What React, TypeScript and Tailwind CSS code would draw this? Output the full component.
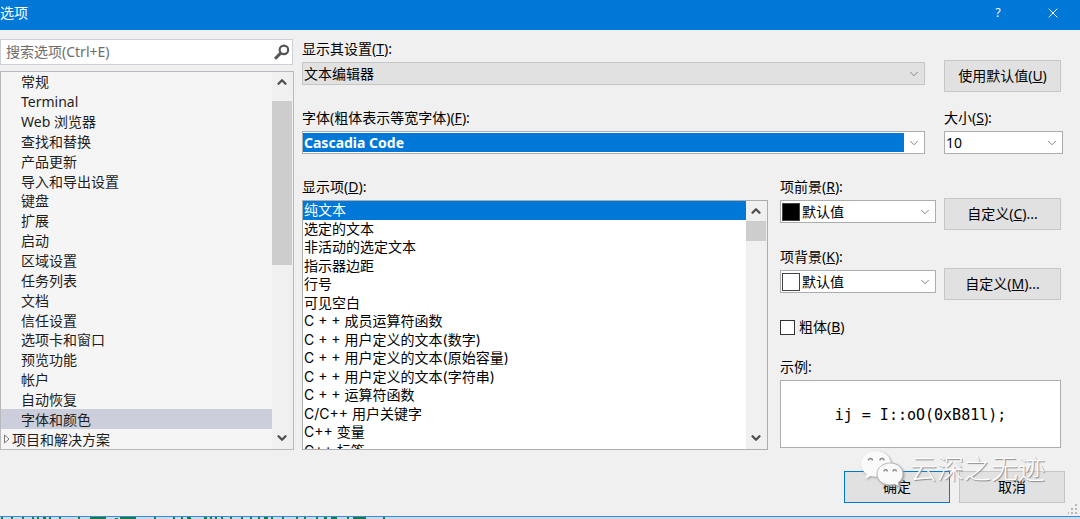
import React from 'react';
import { ChevronDown, ChevronUp, X } from 'lucide-react';

const treeItems = [
  '常规', 'Terminal', 'Web 浏览器', '查找和替换', '产品更新', '导入和导出设置', '键盘', '扩展', '启动',
  '区域设置', '任务列表', '文档', '信任设置', '选项卡和窗口', '预览功能', '帐户', '自动恢复', '字体和颜色',
];

const displayItems = [
  '纯文本', '选定的文本', '非活动的选定文本', '指示器边距', '行号', '可见空白', 'C + + 成员运算符函数',
  'C + + 用户定义的文本(数字)', 'C + + 用户定义的文本(原始容量)', 'C + + 用户定义的文本(字符串)',
  'C + + 运算符函数', 'C/C++ 用户关键字', 'C++ 变量', 'C++ 标签',
];

const buttonClass = 'h-8 border border-[#c6c6c6] bg-[#e1e1e1] text-center leading-[30px]';

function FieldLabel({ id, text, hotkey }: { id: string; text: string; hotkey: string }) {
  return (
    <label htmlFor={id} className="mb-[3px] block h-5 leading-5">
      {text}(<u className="underline-offset-1">{hotkey}</u>):
    </label>
  );
}

type ComboProps = {
  id: string;
  value: string;
  frame?: string;
  field?: string;
  swatch?: string;
};

function Combo({ id, value, frame = 'border-[#adadad] bg-white', field = '', swatch }: ComboProps) {
  return (
    <div className={`flex h-[23px] items-center border py-px ${frame}`}>
      {swatch && <span className={`mx-px size-[18px] shrink-0 border border-[#444] ${swatch}`} />}
      <select id={id} defaultValue={value} className={`h-full min-w-0 flex-1 appearance-none pl-px leading-[19px] outline-none ${field}`}>
        <option>{value}</option>
      </select>
      <ChevronDown className="mx-[3px] size-3.5 shrink-0 text-[#777]" strokeWidth={1.5} />
    </div>
  );
}

function ScrollBar({ lead, thumb }: { lead: string; thumb: string }) {
  return (
    <div className="flex w-[21px] shrink-0 flex-col items-center bg-[#f0f0f0] pr-px">
      <div className={`flex items-center ${lead}`}>
        <ChevronUp className="size-3.5 text-[#505050]" strokeWidth={4} />
      </div>
      <div className={`w-full bg-[#cdcdcd] ${thumb}`} />
      <ChevronDown className="mt-auto mb-1 size-3.5 text-[#505050]" strokeWidth={4} />
    </div>
  );
}

function OptionTree() {
  return (
    <aside className="w-[294px] shrink-0">
      <div className="mr-px flex h-[26px] items-center border border-[#ccced8] bg-white pr-0.5">
        <input
          type="text"
          aria-label="搜索选项"
          placeholder="搜索选项(Ctrl+E)"
          className="min-w-0 flex-1 pl-[5px] outline-none placeholder:text-[#6d6d6d]"
        />
        <svg viewBox="0 0 15 15" className="size-4" fill="none" stroke="#555">
          <circle cx="9.3" cy="5.5" r="4" strokeWidth="2" />
          <path d="M6.3 8.6 1 13.8" strokeWidth="2.8" />
        </svg>
      </div>
      <div className="mt-1.5 flex h-[379px] border border-[#b9b9bd] bg-[#f5f5f5]">
        <ul role="tree" aria-label="选项" className="flex flex-1 flex-col text-[#1e1e1e]">
          {treeItems.map((item) => (
            <li
              key={item}
              role="treeitem"
              aria-selected={item === '字体和颜色'}
              className="flex flex-1 items-center pl-5 leading-[19px] aria-selected:bg-[#cccedb]"
            >
              {item}
            </li>
          ))}
          <li role="treeitem" aria-selected={false} className="flex flex-1 items-center gap-0.5 pl-[3px] leading-[19px]">
            <svg viewBox="0 0 6 10" className="h-2.5 w-1.5" fill="#fff" stroke="#777">
              <path d="M.5 1 5 5 .5 9Z" />
            </svg>
            项目和解决方案
          </li>
        </ul>
        <ScrollBar lead="h-[29px] pb-2.5" thumb="h-[164px]" />
      </div>
    </aside>
  );
}

function DisplayItems() {
  return (
    <div className="min-w-0 flex-1">
      <FieldLabel id="items" text="显示项" hotkey="D" />
      <div className="flex h-[250px] overflow-hidden border border-[#adadad] bg-white">
        <ul
          id="items"
          role="listbox"
          aria-label="显示项"
          className="flex h-[259px] flex-1 flex-col font-[Inter,'Noto_Sans_CJK_SC',sans-serif]"
        >
          {displayItems.map((item, i) => (
            <li
              key={item}
              role="option"
              aria-selected={i === 0}
              className="flex-1 pl-px leading-[18px] aria-selected:bg-[#0078d7] aria-selected:text-white"
            >
              {item}
            </li>
          ))}
        </ul>
        <ScrollBar lead="h-5" thumb="h-5" />
      </div>
    </div>
  );
}

function ColorRow({ id, text, hotkey, customKey, swatch }: { id: string; text: string; hotkey: string; customKey: string; swatch: string }) {
  return (
    <div className="flex items-end gap-2">
      <div className="mb-[7px] w-[156px]">
        <FieldLabel id={id} text={text} hotkey={hotkey} />
        <Combo id={id} value="默认值" swatch={swatch} />
      </div>
      <button type="button" className={`w-[117px] ${buttonClass}`}>
        自定义(<u className="underline-offset-1">{customKey}</u>)...
      </button>
    </div>
  );
}

function FontSettings() {
  return (
    <section className="min-w-0 flex-1">
      <div className="flex gap-[19px]">
        <div className="flex-1">
          <FieldLabel id="scope" text="显示其设置" hotkey="T" />
          <Combo id="scope" value="文本编辑器" frame="border-[#c6c6c6] bg-[#e1e1e1]" />
        </div>
        <div className="w-[119px] pt-[21px]">
          <button type="button" className={`w-[117px] ${buttonClass}`}>
            使用默认值(<u className="underline-offset-1">U</u>)
          </button>
        </div>
      </div>

      <div className="mt-4 flex gap-[19px]">
        <div className="flex-1">
          <FieldLabel id="font" text="字体(粗体表示等宽字体)" hotkey="F" />
          <Combo id="font" value="Cascadia Code" field="bg-[#0078d7] font-bold text-white" />
        </div>
        <div className="w-[119px]">
          <FieldLabel id="size" text="大小" hotkey="S" />
          <Combo id="size" value="10" />
        </div>
      </div>

      <div className="mt-[23px] flex gap-3">
        <DisplayItems />
        <div className="w-[283px]">
          <ColorRow id="foreground" text="项前景" hotkey="R" customKey="C" swatch="bg-black" />
          <div className="mt-[17px]">
            <ColorRow id="background" text="项背景" hotkey="K" customKey="M" swatch="bg-white" />
          </div>
          <label className="mt-[17px] flex h-5 items-center gap-1">
            <input type="checkbox" className="size-[15px] appearance-none border border-[#333] bg-white" />
            <span>粗体(<u className="underline-offset-1">B</u>)</span>
          </label>
          <p className="mt-5 h-5 leading-5">示例:</p>
          <div className="mt-[3px] mr-0.5 flex h-[68px] items-center justify-center border border-[#adadad] bg-white pt-1">
            <code className="font-['DejaVu_Sans_Mono',monospace] text-[15px]">ij = I::oO(0xB81l);</code>
          </div>
        </div>
      </div>
    </section>
  );
}

function Watermark() {
  return (
    <div className="pointer-events-none absolute -top-[21px] right-[35px] flex items-center gap-1.5">
      <svg viewBox="0 0 44 38" className="h-[38px] w-11 drop-shadow-[1px_1px_1px_#999]">
        <path d="M16 1C7.500 1 1 6.800 1 14c0 4.200 2.200 7.700 5.700 10l-1.400 5 5.300-3c1.700.5 3.500.8 5.400.8 8.300 0 15-5.800 15-12.800S24.300 1 16 1Z" fill="#fafafa" />
        <path d="M30 13c-7.200 0-13 4.700-13 11s5.800 11 13 11c1.700 0 3.300-.2 4.700-.7l4.700 2.500-1.200-4.200C41.300 30.600 43 27.500 43 24c0-6.300-5.800-11-13-11Z" fill="#fafafa" stroke="#aaa" strokeWidth=".8" />
        <g fill="none" stroke="#888" strokeWidth="1.400">
          <path d="M8.500 10.500a2 2 0 0 1 4 0M20 10.500a2 2 0 0 1 4 0M24 21.500a1.700 1.700 0 0 1 3.400 0M33 21.500a1.700 1.700 0 0 1 3.400 0" />
        </g>
      </svg>
      <span className="text-[27px] leading-9 font-light text-white [text-shadow:1px_1px_1px_#888]">云深之无迹</span>
    </div>
  );
}

export default function App() {
  return (
    <div className="bg-[#f0f0f0] font-['Noto_Sans','Noto_Sans_CJK_SC',sans-serif] text-sm text-black">
      <header className="flex h-[30px] items-center bg-[#0078d7] text-white">
        <h1 className="flex-1 pb-1 leading-5">选项</h1>
        <button type="button" aria-label="帮助" className="w-[54px] pb-1 text-xs">?</button>
        <button type="button" aria-label="关闭" className="flex w-[55px] justify-center pb-1">
          <X className="size-4" strokeWidth={1.5} />
        </button>
      </header>

      <main className="flex gap-2 pt-[9px] pr-[17px]">
        <OptionTree />
        <FontSettings />
      </main>

      <footer className="relative mt-[21px] flex justify-end gap-[9px] pr-[15px] pb-[13px]">
        <button type="submit" className="h-8 w-[106px] border border-[#0078d7] bg-[#e1e1e1]">确定</button>
        <button type="button" className={`w-[106px] ${buttonClass}`}>取消</button>
        <Watermark />
        <svg viewBox="0 0 10 10" className="absolute right-0.5 bottom-0.5 size-2.5" fill="#b8b8b8">
          <path d="M7 0h2v2H7zM7 4h2v2H7zM7 8h2v2H7zM3 4h2v2H3zM3 8h2v2H3zM0 8h1v2H0z" />
        </svg>
      </footer>

      {/* sliver of the editor window behind the dialog */}
      <div className="h-[3px] overflow-hidden border-t border-[#3c8ad8] bg-[#c4dcee]">
        <svg viewBox="0 0 400 2" className="block h-0.5 w-[400px]" fill="#1a7a45">
          <path d="M1 0h2v2H1zM11 0h2v2h-2zM22 0h2v2h-2zM32 0h2v2h-2zM37 0h2v2h-2zM43 0h3v2h-3zM49 0h2v2h-2zM59 0h2v2h-2zM78 0h2v2h-2zM90 0h16v2H90zM115 1h3v1h-3zM120 0h16v2h-16zM154 0h2v2h-2zM173 0h2v2h-2zM181 0h2v2h-2zM187 0h4v2h-4zM204 0h3v2h-3zM210 0h2v2h-2zM215 0h2v2h-2zM221 0h2v2h-2zM230 0h2v2h-2zM241 0h2v2h-2zM250 0h2v2h-2zM258 0h2v2h-2zM264 0h4v2h-4zM271 0h2v2h-2zM282 0h2v2h-2zM296 0h2v2h-2zM304 0h2v2h-2zM316 0h2v2h-2zM324 0h3v2h-3zM331 0h6v2h-6zM347 0h2v2h-2zM353 0h13v2h-13zM383 0h2v2h-2z" />
        </svg>
      </div>
    </div>
  );
}
